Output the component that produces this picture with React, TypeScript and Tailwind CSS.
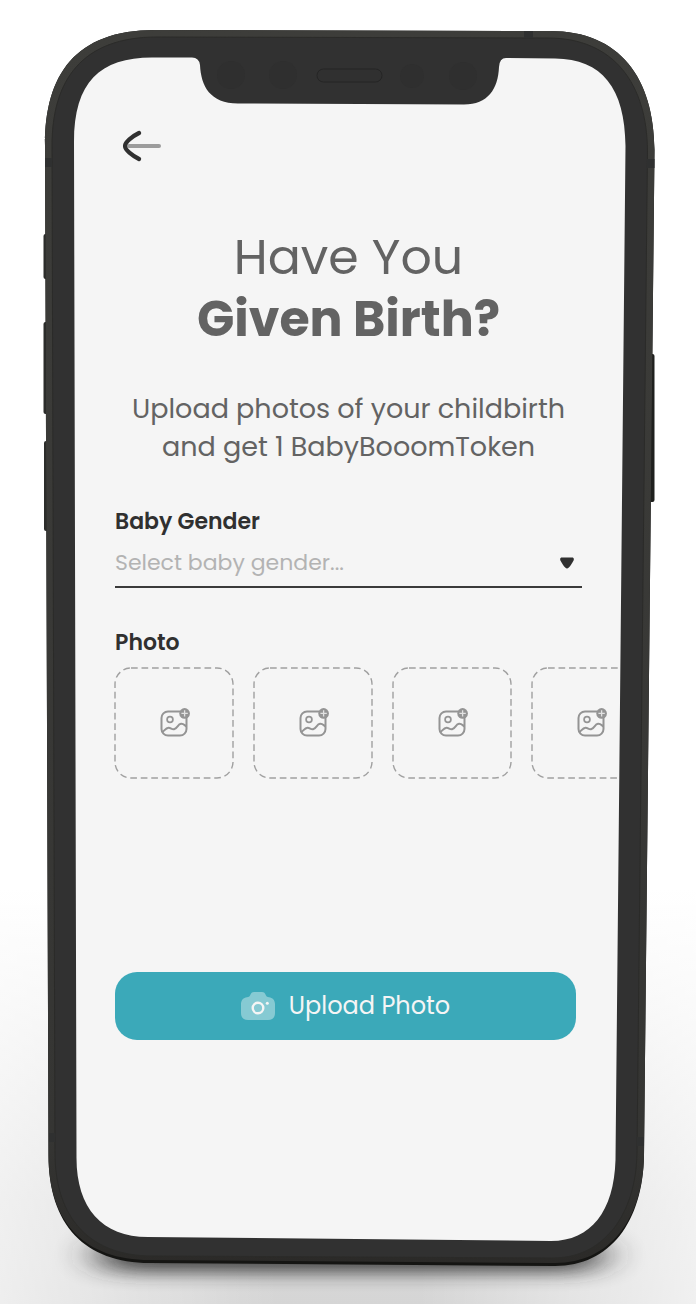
import React from "react";

function DeviceFrame() {
  return (
    <svg
      aria-hidden="true"
      viewBox="0 0 696 1304"
      preserveAspectRatio="none"
      className="absolute inset-0 h-full w-full"
    >
      <defs>
        <linearGradient id="floor" x1="0" y1="0" x2="0" y2="1">
          <stop offset="0" stopColor="#ffffff" />
          <stop offset="0.4" stopColor="#ebebeb" />
          <stop offset="0.75" stopColor="#dadada" />
          <stop offset="1" stopColor="#d5d5d5" />
        </linearGradient>
        <linearGradient id="sides" x1="0" y1="0" x2="1" y2="0">
          <stop offset="0" stopColor="#ffffff" stopOpacity="0.6" />
          <stop offset="0.4" stopColor="#ffffff" stopOpacity="0" />
          <stop offset="0.6" stopColor="#ffffff" stopOpacity="0" />
          <stop offset="1" stopColor="#ffffff" stopOpacity="0.65" />
        </linearGradient>
        <linearGradient id="rim" x1="0" y1="0" x2="0" y2="1">
          <stop offset="0" stopColor="#3d3d3a" />
          <stop offset="0.9" stopColor="#353533" />
          <stop offset="1" stopColor="#2b2a28" />
        </linearGradient>
        <filter id="soft" x="-20%" y="-100%" width="140%" height="300%">
          <feGaussianBlur stdDeviation="22 9" />
        </filter>
      </defs>
      <rect width="696" height="1304" fill="#ffffff" />
      <rect y="890" width="696" height="414" fill="url(#floor)" />
      <rect y="890" width="696" height="414" fill="url(#sides)" />
      <rect x="100" y="1238" width="500" height="34" rx="17" fill="#2b2b2b" opacity="0.85" filter="url(#soft)" />

      <rect x="43.500" y="234" width="6" height="45" rx="2" fill="#2c2d2b" />
      <rect x="43.500" y="322" width="6" height="92" rx="2" fill="#2c2d2b" />
      <rect x="44" y="441" width="6" height="90" rx="2" fill="#2c2d2b" />
      <rect x="648" y="354" width="6.500" height="148" rx="2" fill="#1f201e" />

      <path
        d="M45 145C45 75 75 30 155 30L550 31C620 31 654 78 654.500 150L644 1155C643 1222 610 1266 555 1266L150 1263C85 1263 48.500 1225 48.500 1155Z"
        fill="#151513"
      />
      <path
        d="M45 145C45 75 75 30 155 30L550 31C620 31 654 78 654.500 150L644 1155C643 1219 610 1263 555 1263L150 1260C85 1260 48.500 1223 48.500 1155Z"
        fill="url(#rim)"
      />
      <path
        d="M52 146C52 80 82 37 157 37L548 38C614 38 647 84 647.500 151L637 1153C636 1214 604 1258 553 1258L152 1256C91 1256 55 1219 55 1153Z"
        fill="#313131"
        stroke="#2b2b29"
        strokeWidth="1"
      />
      <g fill="#2f3030">
        <path d="M45 158h7v9h-7zM647 159h7.500v9h-7.500zM524 31h9v7h-9zM49 1133h6v9h-6zM637 1137h7v9h-7z" />
      </g>

      <path
        d="M74 142C74 82 100 57.500 152 57.500L192 57.500Q199 57.500 200 65C201 86 210 103.500 238 103.500L464 104.500C488 104.500 498 89 499 67Q499.500 58 506 58L555 58.500C602 59 625 88 625.500 146L615.500 1160C614 1211 591 1241 551 1241L148 1237C102 1237 76.500 1208 76.500 1158Z"
        fill="#f5f5f5"
      />

      <rect x="317" y="69" width="65" height="13" rx="6.500" fill="#303030" stroke="#252525" strokeWidth="1" />
      <g fill="#2f2f2f">
        <circle cx="231" cy="75" r="14" />
        <circle cx="283" cy="75" r="14" />
        <circle cx="412" cy="76" r="12" />
        <circle cx="463" cy="76" r="14" />
      </g>
    </svg>
  );
}

function BackArrow() {
  return (
    <svg aria-hidden="true" viewBox="0 0 40 32" fill="none" strokeLinecap="round" className="h-8 w-10">
      <path d="M6 16H36" stroke="#9c9c9c" strokeWidth="4" />
      <path d="M16 3C9 6.500 2 12 2 16C2 20 9 25.500 16 29" stroke="#303030" strokeWidth="4.200" />
    </svg>
  );
}

function AddImageIcon() {
  return (
    <svg aria-hidden="true" viewBox="0 0 32 30" fill="none" className="relative h-[30px] w-8">
      <rect x="3.500" y="3.500" width="25" height="24" rx="6.500" stroke="#949494" strokeWidth="2" />
      <circle cx="12" cy="11.500" r="2.900" stroke="#949494" strokeWidth="1.700" />
      <path
        d="M4.500 24C6.500 22.500 8 20 10.500 19.800C13 19.700 14 21.800 16.500 21C19.500 20 20 16.200 23 15.800C25.500 15.500 26.500 17.200 28.500 18.500"
        stroke="#949494"
        strokeWidth="2"
      />
      <circle cx="26.600" cy="5.400" r="5.300" fill="#949494" />
      <path d="M26.600 2.200V8.600M23.400 5.400H29.800" stroke="#e2e2e2" strokeWidth="1.300" />
    </svg>
  );
}

function CameraIcon() {
  return (
    <svg aria-hidden="true" viewBox="0 0 34 28" className="h-7 w-[34px]">
      <path
        d="M9 3.500C10 1 11 0 13 0H21C23 0 24 1 25 3.500C25.500 5 26.500 5 28 5.200C31.500 5.800 34 8 34 12V21C34 25.500 31.500 28 27 28H7C2.500 28 0 25.500 0 21V12C0 8 2.500 5.800 6 5.200C7.500 5 8.500 5 9 3.500Z"
        fill="#86cad3"
      />
      <circle cx="17" cy="16" r="5.300" fill="none" stroke="#f5f5f5" strokeWidth="2.400" />
      <circle cx="26.300" cy="11.200" r="1.500" fill="#f5f5f5" />
    </svg>
  );
}

function PhotoSlot({ index }: { index: number }) {
  return (
    <button
      type="button"
      aria-label={`Add photo ${index}`}
      className="relative flex h-28 w-30 shrink-0 items-center justify-center"
    >
      <svg aria-hidden="true" viewBox="0 0 120 112" fill="none" className="absolute inset-0 h-full w-full">
        <rect
          x="1"
          y="1"
          width="118"
          height="110"
          rx="16"
          stroke="#a0a0a0"
          strokeWidth="1.400"
          strokeDasharray="6.700 3.800"
        />
      </svg>
      <AddImageIcon />
    </button>
  );
}

export default function App() {
  return (
    <div className="relative min-h-screen overflow-hidden bg-white font-['Poppins','Inter',sans-serif]">
      <DeviceFrame />
      <main className="relative flex flex-col pt-[126px] pr-[114px] pb-[263px] pl-[115px]">
        <button type="button" aria-label="Back" className="ml-2 flex h-10 w-10 items-center">
          <BackArrow />
        </button>

        <h1 className="mt-15 text-center text-[49px] leading-[62px] text-[#636363]">
          Have You
          <br />
          <strong className="font-bold">Given Birth?</strong>
        </h1>
        <p className="mt-10 text-center text-[27px] leading-[38px] text-[#636363]">
          Upload photos of your childbirth
          <br />
          and get 1 BabyBooomToken
        </p>

        <label htmlFor="gender" className="mt-10 text-[22px] leading-8 font-semibold text-[#303030]">
          Baby Gender
        </label>
        <div className="relative flex border-b-2 border-[#3a3a3a]">
          <select
            id="gender"
            defaultValue=""
            className="h-12 w-full appearance-none bg-transparent text-[22px] text-[#b3b3b3] outline-none"
          >
            <option value="">Select baby gender...</option>
            <option value="girl">Girl</option>
            <option value="boy">Boy</option>
          </select>
          <svg
            aria-hidden="true"
            viewBox="0 0 14 12"
            className="pointer-events-none absolute top-[19px] right-2 h-3 w-3.5"
          >
            <path
              d="M2 .5H12C14 .5 14.300 2.200 13.300 4C12 6.500 10.500 8.800 8.800 10.600C7.500 11.900 6.500 11.900 5.200 10.600C3.500 8.800 2 6.500 .7 4C-.3 2.200 0 .5 2 .5Z"
              fill="#303030"
            />
          </svg>
        </div>

        <h2 className="mt-[39px] text-[22px] leading-8 font-semibold text-[#303030]">Photo</h2>
        <div className="mt-2 -mr-[37px] -ml-px flex gap-[19px] overflow-hidden">
          <PhotoSlot index={1} />
          <PhotoSlot index={2} />
          <PhotoSlot index={3} />
          <PhotoSlot index={4} />
        </div>

        <button
          type="button"
          className="mt-[193px] mr-1.5 flex h-[68px] items-center justify-center gap-3.5 rounded-[22px] bg-[#3ba9b9] text-[24px] text-[#f5f5f5]"
        >
          <CameraIcon />
          Upload Photo
        </button>
      </main>
    </div>
  );
}
